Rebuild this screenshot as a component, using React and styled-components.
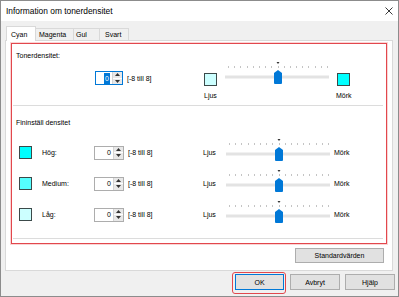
import React from "react";
import styled, { createGlobalStyle } from "styled-components";

const Global = createGlobalStyle`
  html, body { margin: 0; padding: 0; background: #fff; }
  body {
    font-family: "Liberation Sans", Arial, sans-serif;
    font-size: 7px;
    color: #000;
  }
`;

const Window = styled.div`
  width: 399px;
  height: 297px;
  box-sizing: border-box;
  border: 1px solid #8c8c8c;
  background: #f0f0f0;
  display: flex;
  flex-direction: column;
  overflow: hidden;
`;

const TitleBar = styled.div`
  height: 20px;
  background: #fff;
  display: flex;
  align-items: center;
  justify-content: space-between;
  padding: 0 5px 0 5px;
  font-size: 8.4px;
`;

const Body = styled.div`
  padding: 5px 5px 0 4px;
`;

const TabRow = styled.div`
  display: flex;
  align-items: flex-end;
  height: 15px;
  padding-left: 1px;
  margin-bottom: -1px;
  position: relative;
  z-index: 1;
`;

const Tab = styled.div`
  box-sizing: border-box;
  width: ${(p) => p.$w}px;
  height: ${(p) => (p.$active ? 15 : 13)}px;
  padding: 0 0 0 ${(p) => p.$pad}px;
  margin-left: ${(p) => (p.$first ? 0 : -1)}px;
  border: 1px solid #d9d9d9;
  border-bottom: ${(p) => (p.$active ? "none" : "1px solid #d9d9d9")};
  background: ${(p) => (p.$active ? "#fff" : "#f0f0f0")};
  position: relative;
  z-index: ${(p) => (p.$active ? 2 : 1)};
  display: flex;
  align-items: center;
  line-height: 1;
`;

const Panel = styled.div`
  box-sizing: border-box;
  height: 231px;
  background: #fff;
  border: 1px solid #d9d9d9;
  padding: 2px 5px 7px 5px;
  display: flex;
  flex-direction: column;
`;

const Frame = styled.div`
  box-sizing: border-box;
  height: 201px;
  border: 1px solid #e2474d;
  box-shadow: 0 0 0 1px rgba(244, 160, 160, 0.45);
  padding: 0 3px 4px 1px;
`;

const Section = styled.div`
  box-sizing: border-box;
  height: ${(p) => p.$h}px;
  border-bottom: 1px solid #dcdcdc;
  padding-left: 3px;
`;

const Heading = styled.div`
  padding-top: ${(p) => p.$top}px;
  line-height: 11px;
`;

const TopRow = styled.div`
  display: flex;
  align-items: flex-start;
`;

const LeftArea = styled.div`
  width: 188px;
  box-sizing: border-box;
  padding: 10px 0 0 79px;
  display: flex;
  align-items: center;
`;

const ScaleGrid = styled.div`
  display: grid;
  grid-template-columns: 13px 104px 13px;
  column-gap: 8px;
  align-items: start;
`;

const Swatch = styled.div`
  box-sizing: border-box;
  width: 13px;
  height: 13px;
  border: 1px solid #3c4a4a;
  background: ${(p) => p.$color};
  margin-top: ${(p) => p.$top || 0}px;
  margin-left: ${(p) => p.$left || 0}px;
  flex-shrink: 0;
`;

const ScaleLabel = styled.div`
  margin-top: 5px;
  line-height: 10px;
  white-space: nowrap;
  grid-column: ${(p) => p.$col};
  margin-left: ${(p) => p.$left || 0}px;
`;

const SpinWrap = styled.div`
  box-sizing: border-box;
  width: ${(p) => p.$w}px;
  height: 14px;
  display: flex;
  border: 1px solid ${(p) => (p.$focus ? "#0078d7" : "#adadad")};
  background: #fff;
  flex-shrink: 0;
`;

const SpinValue = styled.div`
  flex: 1;
  display: flex;
  align-items: center;
  justify-content: flex-end;
  padding-right: 2px;
  line-height: 1;
`;

const Selected = styled.span`
  background: #0078d7;
  color: #fff;
  padding: 2px 1px;
`;

const SpinButtons = styled.div`
  width: 9px;
  display: flex;
  flex-direction: column;
  border-left: 1px solid #d4d4d4;
`;

const SpinBtn = styled.div`
  flex: 1;
  background: #e8e8e8;
  display: flex;
  align-items: center;
  justify-content: center;
  border-bottom: ${(p) => (p.$top ? "1px solid #fff" : "none")};
`;

const Range = styled.div`
  margin-left: 4px;
  width: ${(p) => p.$w || "auto"};
  white-space: nowrap;
  flex-shrink: 0;
`;

const Rows = styled.div`
  margin-top: 9px;
`;

const Row = styled.div`
  height: 31px;
  display: flex;
  align-items: center;
`;

const RowLabel = styled.div`
  margin-left: 10px;
  width: 52px;
  flex-shrink: 0;
`;

const SideLabel = styled.div`
  width: ${(p) => p.$w || "auto"}px;
  margin-left: ${(p) => p.$left || 0}px;
  flex-shrink: 0;
`;

const SliderSvg = styled.svg`
  display: block;
  flex-shrink: 0;
  margin-bottom: ${(p) => p.$mb || 0}px;
`;

const DefaultsRow = styled.div`
  display: flex;
  justify-content: flex-end;
  margin-top: 4px;
  padding-right: 3px;
`;

const Button = styled.button`
  box-sizing: border-box;
  width: ${(p) => p.$w}px;
  height: ${(p) => p.$h || 16}px;
  padding: 0;
  background: #e1e1e1;
  border: 1px solid ${(p) => (p.$default ? "#0078d7" : "#adadad")};
  font-family: inherit;
  font-size: 7px;
  color: #000;
  position: relative;
`;

const Footer = styled.div`
  display: flex;
  justify-content: flex-end;
  gap: 5px;
  padding: 3px 3px 0 0;
`;

const Highlight = styled.div`
  position: relative;
  margin-right: 1px;
  &::after {
    content: "";
    position: absolute;
    inset: -2px -2px -4px -3px;
    border: 1px solid #e2474d;
    border-radius: 3px;
    pointer-events: none;
  }
`;

const Slider = ({ mb }) => {
  const ticks = [];
  for (let i = 0; i < 17; i++) {
    const x = Math.round(3 + i * 6.1875);
    ticks.push(<rect key={i} x={x} y={5} width={1} height={2} fill="#c4c4c4" />);
  }
  return (
    <SliderSvg width="104" height="25" viewBox="0 0 104 25" $mb={mb}>
      <polygon points="51.5,1 54.5,1 53,3" fill="#333" />
      {ticks}
      <rect x="0" y="14.5" width="104" height="3" fill="#e3e3e3" />
      <path d="M49 12 L53 9 L57 12 L57 22 Q57 23 56 23 L50 23 Q49 23 49 22 Z" fill="#0078d7" />
    </SliderSvg>
  );
};

const Arrow = ({ up }) => (
  <svg width="5" height="3" viewBox="0 0 5 3">
    <polygon points={up ? "0,3 5,3 2.5,0" : "0,0 5,0 2.5,3"} fill="#333" />
  </svg>
);

const Spin = ({ w, focus }) => (
  <SpinWrap $w={w} $focus={focus}>
    <SpinValue>{focus ? <Selected>0</Selected> : "0"}</SpinValue>
    <SpinButtons>
      <SpinBtn $top>
        <Arrow up />
      </SpinBtn>
      <SpinBtn>
        <Arrow />
      </SpinBtn>
    </SpinButtons>
  </SpinWrap>
);

const fineRows = [
  { label: "Hög:", color: "#00ffff" },
  { label: "Medium:", color: "#55ffff" },
  { label: "Låg:", color: "#ccffff" },
];

const tabs = [
  { name: "Cyan", w: 30, pad: 4, active: true },
  { name: "Magenta", w: 39, pad: 3 },
  { name: "Gul", w: 27, pad: 2 },
  { name: "Svart", w: 30, pad: 5 },
];

export default function App() {
  return (
    <>
      <Global />
      <Window>
        <TitleBar>
          <span>Information om tonerdensitet</span>
          <svg width="8" height="8" viewBox="0 0 8 8">
            <path d="M0.5 0.5 L7.5 7.5 M7.5 0.5 L0.5 7.5" stroke="#222" strokeWidth="0.9" />
          </svg>
        </TitleBar>
        <Body>
          <TabRow>
            {tabs.map((t, i) => (
              <Tab key={t.name} $w={t.w} $pad={t.pad} $active={t.active} $first={i === 0}>
                {t.name}
              </Tab>
            ))}
          </TabRow>
          <Panel>
            <Frame>
              <Section $h={62}>
                <Heading $top={6}>Tonerdensitet:</Heading>
                <TopRow>
                  <LeftArea>
                    <Spin w={28} focus />
                    <Range>[-8 till 8]</Range>
                  </LeftArea>
                  <ScaleGrid>
                    <Swatch $color="#ccffff" $top={12} />
                    <Slider />
                    <Swatch $color="#00ffff" $top={12} />
                    <ScaleLabel $col={1}>Ljus</ScaleLabel>
                    <ScaleLabel $col={3} $left={-1}>Mörk</ScaleLabel>
                  </ScaleGrid>
                </TopRow>
              </Section>
              <Section $h={133}>
                <Heading $top={11}>Fininställ densitet</Heading>
                <Rows>
                  {fineRows.map((r) => (
                    <Row key={r.label}>
                      <Swatch $color={r.color} $left={3} />
                      <RowLabel>{r.label}</RowLabel>
                      <Spin w={30} />
                      <Range $w="75px">[-8 till 8]</Range>
                      <SideLabel $w={23}>Ljus</SideLabel>
                      <Slider mb={5} />
                      <SideLabel $left={4}>Mörk</SideLabel>
                    </Row>
                  ))}
                </Rows>
              </Section>
            </Frame>
            <DefaultsRow>
              <Button $w={89} $h={15}>Standardvärden</Button>
            </DefaultsRow>
          </Panel>
        </Body>
        <Footer>
          <Highlight>
            <Button $w={49} $default>OK</Button>
          </Highlight>
          <Button $w={50}>Avbryt</Button>
          <Button $w={50}>Hjälp</Button>
        </Footer>
      </Window>
    </>
  );
}
